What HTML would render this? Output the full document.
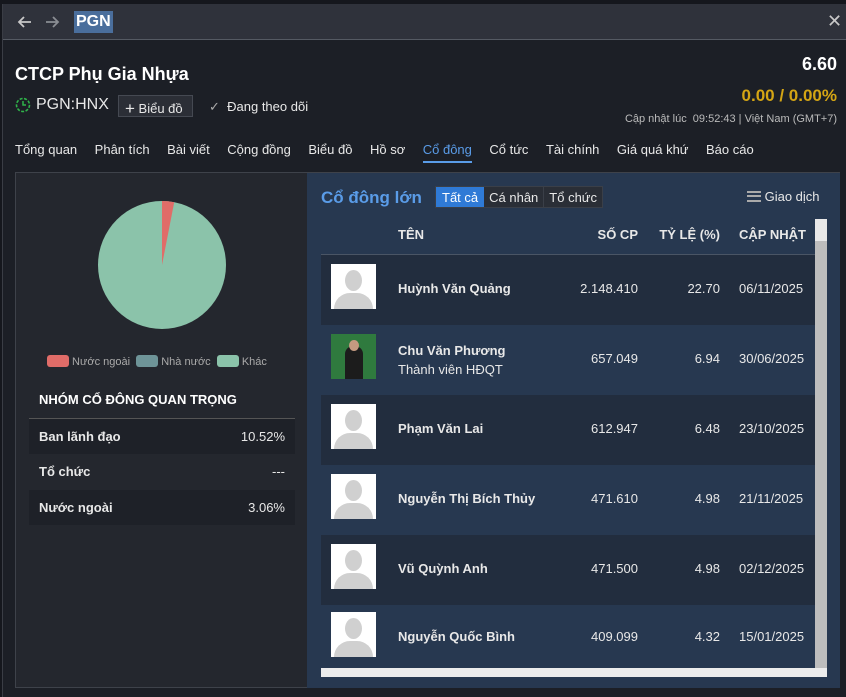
<!DOCTYPE html>
<html><head><meta charset="utf-8"><style>
*{box-sizing:border-box;margin:0;padding:0}
body{width:846px;height:697px;background:#15171d;font-family:"Liberation Sans",sans-serif;color:#e8e8e8;position:relative;overflow:hidden}
.win{position:absolute;left:2px;top:4px;width:844px;height:693px;background:#1c1f26;border-left:1px solid #3a3d45}
.top{position:absolute;left:0;top:0;width:844px;height:36px;background:#2f323b;border-bottom:1px solid #555a63}
.abs{position:absolute;white-space:nowrap}
.tabs span{margin-right:17.5px;font-size:13px}
.left{position:absolute;left:15px;top:172px;width:292px;height:516px;background:#24272e;border:1px solid #3e424a;border-right:none}
.right{position:absolute;left:307px;top:172px;width:533px;height:516px;background:#273850;border-top:1px solid #3e424a}
.row{position:absolute;left:14px;width:494px;height:70px}
.c{position:absolute;font-size:14px}
</style></head><body>
<div class="win">
<div class="top">
<svg class="abs" style="left:14px;top:10px" width="16" height="16" viewBox="0 0 16 16"><path d="M14 8H2M7 3L2 8l5 5" stroke="#c8c8c8" stroke-width="1.8" fill="none"/></svg>
<svg class="abs" style="left:41px;top:10px" width="16" height="16" viewBox="0 0 16 16"><path d="M2 8h12M9 3l5 5-5 5" stroke="#8a8d93" stroke-width="1.8" fill="none"/></svg>
<div class="abs" style="left:71px;top:7px;background:#4a6e9c;color:#fff;font-weight:bold;font-size:16px;padding:2px 2px 2px">PGN</div>
<div class="abs" style="left:824px;top:7px;font-size:18px;color:#c8c8c8">✕</div>
</div>
</div>
<div class="abs" style="left:15px;top:64px;font-size:18px;font-weight:bold;color:#fff">CTCP Phụ Gia Nhựa</div>
<svg class="abs" style="left:15px;top:97px" width="16" height="16" viewBox="0 0 16 16"><circle cx="8" cy="8" r="6.5" stroke="#2fb34a" stroke-width="1.6" fill="none" stroke-dasharray="3 1.5"/><path d="M8 4v4h3" stroke="#2fb34a" stroke-width="1.5" fill="none"/></svg>
<div class="abs" style="left:36px;top:96px;font-size:16px;color:#e8e8e8">PGN:HNX</div>
<div class="abs" style="left:118px;top:95px;width:75px;height:22px;background:#2b2e36;border:1px solid #454952;font-size:13px;padding:2px 0 0 6px"><span style="font-size:17px;position:relative;top:1px">+</span> Biểu đồ</div>
<div class="abs" style="left:209px;top:99px;font-size:13px"><span style="color:#aaa">✓</span>&nbsp; Đang theo dõi</div>
<div class="abs" style="right:9px;top:54px;font-size:18px;font-weight:bold;color:#fff">6.60</div>
<div class="abs" style="right:9px;top:86px;font-size:17px;font-weight:bold;color:#d4a514">0.00 / 0.00%</div>
<div class="abs" style="right:9px;top:113px;font-size:11px;color:#bbb">Cập nhật lúc&nbsp; 09:52:43 | Việt Nam (GMT+7)</div>
<div class="abs tabs" style="left:15px;top:141px"><span>Tổng quan</span><span>Phân tích</span><span>Bài viết</span><span>Cộng đồng</span><span>Biểu đồ</span><span>Hồ sơ</span><span style="color:#5a9ce8;border-bottom:2px solid #5a9ce8;padding-bottom:4px">Cổ đông</span><span>Cổ tức</span><span>Tài chính</span><span>Giá quá khứ</span><span>Báo cáo</span></div>

<div class="left">
<svg class="abs" style="left:81px;top:27px" width="130" height="130" viewBox="0 0 130 130"><circle cx="65" cy="65" r="64" fill="#8bc3aa"/><path d="M65 65L65 1A64 64 0 0 1 77.2 2.2Z" fill="#e06c68"/></svg>
<div class="abs" style="left:31px;top:182px;font-size:11px;color:#aaa">
<span style="display:inline-block;width:22px;height:12px;background:#e06c68;border-radius:3px;vertical-align:-2px"></span> Nước ngoài&nbsp;
<span style="display:inline-block;width:22px;height:12px;background:#6e9498;border-radius:3px;vertical-align:-2px"></span> Nhà nước&nbsp;
<span style="display:inline-block;width:22px;height:12px;background:#8bc3aa;border-radius:3px;vertical-align:-2px"></span> Khác</div>
<div class="abs" style="left:23px;top:219px;font-size:13px;font-weight:bold;color:#fff">NHÓM CỔ ĐÔNG QUAN TRỌNG</div>
<div class="abs" style="left:13px;top:245px;width:266px;height:1px;background:#555"></div>
<div class="abs" style="left:13px;top:246px;width:266px;height:35px;background:#1e2128"></div>
<div class="abs" style="left:13px;top:317px;width:266px;height:35px;background:#1e2128"></div>
<div class="abs" style="left:23px;top:256px;font-size:13px;font-weight:bold">Ban lãnh đạo</div><div class="abs" style="right:22px;top:256px;font-size:13px">10.52%</div>
<div class="abs" style="left:23px;top:291px;font-size:13px;font-weight:bold">Tổ chức</div><div class="abs" style="right:22px;top:291px;font-size:13px">---</div>
<div class="abs" style="left:23px;top:327px;font-size:13px;font-weight:bold">Nước ngoài</div><div class="abs" style="right:22px;top:327px;font-size:13px">3.06%</div>
</div>

<div class="right">
<div class="abs" style="left:14px;top:15px;font-size:17px;font-weight:bold;color:#5a9ce8">Cổ đông lớn</div>
<div class="abs" style="left:128px;top:13px;height:22px;font-size:13px;display:flex;border:1px solid #3a3f48">
<div style="background:#2f7ad6;color:#fff;padding:3px 6px">Tất cả</div><div style="background:#2a2e36;padding:3px 5px;border-right:1px solid #3a3f48">Cá nhân</div><div style="background:#2a2e36;padding:3px 5px">Tổ chức</div></div>
<div class="abs" style="left:440px;top:16px;font-size:13px"><span style="display:inline-block;width:14px;height:11px;border-top:2px solid #aaa;border-bottom:2px solid #aaa;position:relative;vertical-align:-1px"><span style="position:absolute;left:0;top:2px;width:14px;height:2px;background:#aaa"></span></span> Giao dịch</div>
<div class="abs" style="left:508px;top:46px;width:12px;height:449px;background:#bdbdbd"></div>
<div class="abs" style="left:508px;top:46px;width:12px;height:22px;background:#e8e8e8"></div>
<div class="abs" style="left:14px;top:495px;width:506px;height:9px;background:#ececec"></div>
<div class="c" style="left:91px;top:54px;font-weight:bold;font-size:13px">TÊN</div>
<div class="c" style="right:202px;top:54px;font-weight:bold;font-size:13px">SỐ CP</div>
<div class="c" style="right:120px;top:54px;font-weight:bold;font-size:13px">TỶ LỆ (%)</div>
<div class="c" style="left:432px;top:54px;font-weight:bold;font-size:13px">CẬP NHẬT</div>
<div class="abs" style="left:14px;top:81px;width:494px;height:1px;background:#4a5565"></div>
<div class="row" style="top:82px;background:#222d3e"></div>
<div class="row" style="top:152px;background:#273850"></div>
<div class="row" style="top:222px;background:#222d3e"></div>
<div class="row" style="top:292px;background:#273850"></div>
<div class="row" style="top:362px;background:#222d3e"></div>
<div class="row" style="top:432px;height:63px;background:#273850"></div>
</div>
<div id="rows"></div>
<script>
var d=[["Huỳnh Văn Quảng","2.148.410","22.70","06/11/2025"],["Chu Văn Phương","657.049","6.94","30/06/2025"],["Phạm Văn Lai","612.947","6.48","23/10/2025"],["Nguyễn Thị Bích Thủy","471.610","4.98","21/11/2025"],["Vũ Quỳnh Anh","471.500","4.98","02/12/2025"],["Nguyễn Quốc Bình","409.099","4.32","15/01/2025"]];
var h="";
d.forEach(function(r,i){var y=289+i*70;if(i==5)y=637;
var ay=y-25;
if(i==1){h+='<div class="abs" style="left:331px;top:'+ay+'px;width:45px;height:45px;background:#2f7a3e"><div style="position:absolute;left:14px;top:12px;width:18px;height:33px;background:#1c1c1c;border-radius:8px 8px 0 0"></div><div style="position:absolute;left:18px;top:6px;width:10px;height:11px;background:#c49a80;border-radius:50%"></div></div>';
h+='<div class="abs" style="left:398px;top:'+(y-16)+'px;font-size:13px;font-weight:bold">'+r[0]+'</div><div class="abs" style="left:398px;top:'+(y+3)+'px;font-size:13px">Thành viên HĐQT</div>';}
else{h+='<div class="abs" style="left:331px;top:'+ay+'px;width:45px;height:45px;background:#fff;overflow:hidden"><div style="position:absolute;left:14px;top:6px;width:17px;height:21px;background:#d0d0d0;border-radius:50%"></div><div style="position:absolute;left:3px;top:29px;width:39px;height:24px;background:#d0d0d0;border-radius:16px 16px 0 0"></div></div>';
h+='<div class="abs" style="left:398px;top:'+(y-8)+'px;font-size:13px;font-weight:bold">'+r[0]+'</div>';}
h+='<div class="abs" style="right:208px;top:'+(y-8)+'px;font-size:13px">'+r[1]+'</div><div class="abs" style="right:126px;top:'+(y-8)+'px;font-size:13px">'+r[2]+'</div><div class="abs" style="left:739px;top:'+(y-8)+'px;font-size:13px">'+r[3]+'</div>';});
document.getElementById("rows").innerHTML=h;
</script>
</body></html>
